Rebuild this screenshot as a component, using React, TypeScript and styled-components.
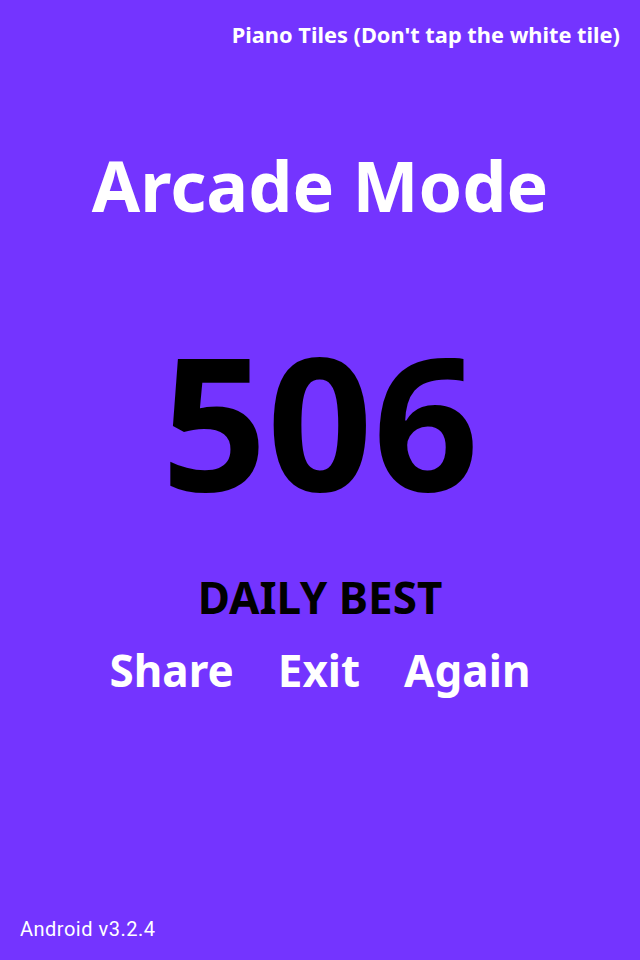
import React from "react";
import styled, {createGlobalStyle} from "styled-components";

const GlobalStyle = createGlobalStyle`
    html, body {
        margin: 0;
        padding: 0;
        background: #7434ff;
    }
`;

const Screen = styled.div`
    width: 640px;
    height: 960px;
    box-sizing: border-box;
    background: #7434ff;
    display: flex;
    flex-direction: column;
    font-family: "Noto Sans", "Open Sans", sans-serif;
    padding: 20px 20px 20px;
`;

const TopBar = styled.div`
    display: flex;
    justify-content: flex-end;
    color: #ffffff;
    font-size: 21.8px;
    font-weight: 700;
    line-height: 30px;
`;

const Title = styled.h1`
    margin: 90px 0 0;
    text-align: center;
    color: #ffffff;
    font-size: 70px;
    font-weight: 700;
    line-height: 90px;
`;

const Score = styled.div`
    margin-top: 94px;
    text-align: center;
    color: #000000;
    font-size: 185px;
    font-weight: 700;
    line-height: 190px;
`;

const Label = styled.div`
    margin-top: 58px;
    text-align: center;
    color: #000000;
    font-size: 44px;
    font-weight: 700;
    line-height: 50px;
`;

const Actions = styled.div`
    display: flex;
    justify-content: center;
    gap: 44px;
    margin-top: 20px;
`;

const ActionButton = styled.button`
    background: none;
    border: none;
    padding: 0;
    color: #ffffff;
    font-family: inherit;
    font-size: 44px;
    font-weight: 700;
    line-height: 56px;
    cursor: pointer;
`;

const Spacer = styled.div`
    flex: 1;
`;

const Version = styled.div`
    color: #ffffff;
    font-family: Roboto, "Noto Sans", sans-serif;
    font-size: 20px;
    letter-spacing: 0.5px;
    line-height: 22px;
`;

export default function App(): React.JSX.Element {
    return (
        <>
            <GlobalStyle/>
            <Screen>
                <TopBar>Piano Tiles (Don't tap the white tile)</TopBar>
                <Title>Arcade Mode</Title>
                <Score>506</Score>
                <Label>DAILY BEST</Label>
                <Actions>
                    <ActionButton>Share</ActionButton>
                    <ActionButton>Exit</ActionButton>
                    <ActionButton>Again</ActionButton>
                </Actions>
                <Spacer/>
                <Version>Android v3.2.4</Version>
            </Screen>
        </>
    );
}
